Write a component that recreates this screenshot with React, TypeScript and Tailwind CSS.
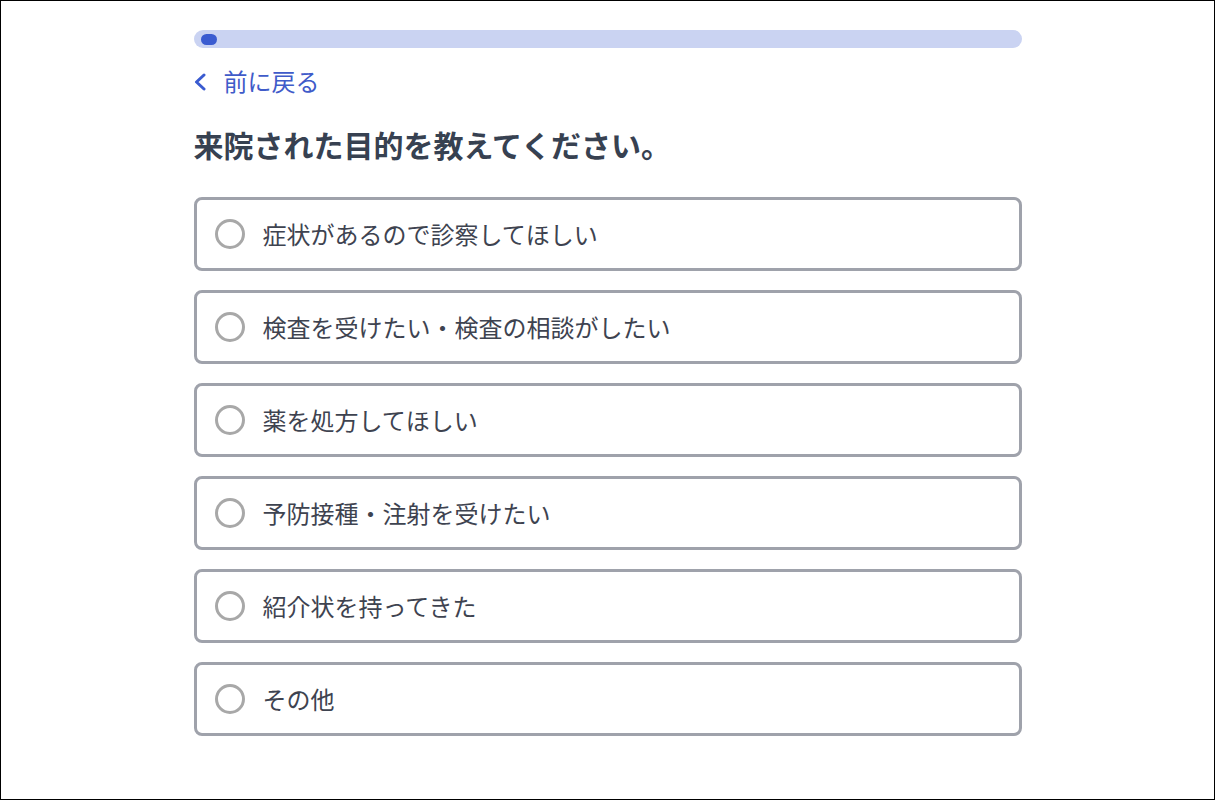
import React from "react";

const options = [
  "症状があるので診察してほしい",
  "検査を受けたい・検査の相談がしたい",
  "薬を処方してほしい",
  "予防接種・注射を受けたい",
  "紹介状を持ってきた",
  "その他",
];

export default function App() {
  return (
    <div
      className="h-[800px] w-full border border-black bg-white"
      style={{ fontFamily: '"Noto Sans CJK JP", "Noto Sans", sans-serif' }}
    >
      <div className="mx-auto w-[828px] pt-[29px]">
        <div className="flex h-[18px] w-full items-center rounded-full bg-[#cad3f2] px-[7px]">
          <div className="h-[11px] w-[16px] rounded-full bg-[#3a5bd0]" />
        </div>
        <button className="mt-[15px] flex items-center gap-[18px] text-[#3f5bc9]">
          <svg width="12" height="18" viewBox="0 0 12 18" className="mt-[2px]">
            <path d="M10 2 L2.5 9 L10 16" fill="none" stroke="#3a5bd0" strokeWidth="3" strokeLinecap="round" strokeLinejoin="round" />
          </svg>
          <span className="text-[24px] leading-[36px]">前に戻る</span>
        </button>
        <h1 className="mt-[25px] text-[30px] font-bold leading-[40px] text-[#374151]">
          来院された目的を教えてください。
        </h1>
        <div className="mt-[33px] flex flex-col gap-[19px]">
          {options.map((o) => (
            <label
              key={o}
              className="flex h-[74px] items-center gap-[18px] rounded-[8px] border-[3px] border-[#9fa2ab] bg-white pl-[18px]"
            >
              <span className="h-[30px] w-[30px] shrink-0 rounded-full border-[3px] border-[#a8a8a8]" />
              <span className="text-[24px] leading-[32px] text-[#3e4350]">{o}</span>
            </label>
          ))}
        </div>
      </div>
    </div>
  );
}
